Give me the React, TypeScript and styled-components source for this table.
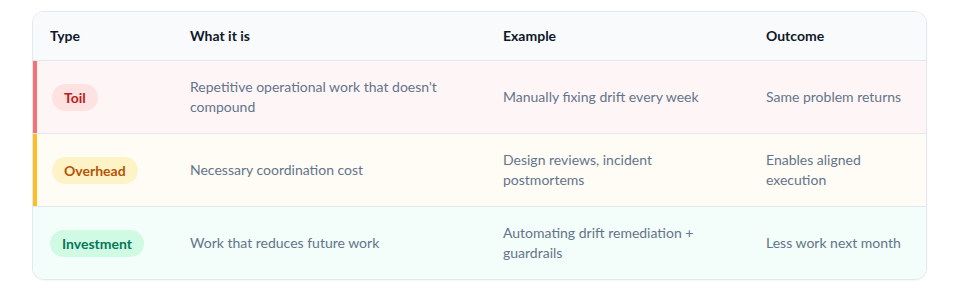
import React from "react";
import styled, { createGlobalStyle } from "styled-components";

const GlobalStyle = createGlobalStyle`
  html, body { margin: 0; padding: 0; background: #ffffff; }
  body { font-family: Lato, "Noto Sans", sans-serif; -webkit-font-smoothing: antialiased; }
`;

type Kind = "toil" | "overhead" | "investment";

const palette: Record<Kind, { row: string; bar: string; pillBg: string; pillFg: string }> = {
  toil: { row: "#fef6f6", bar: "#f87171", pillBg: "#fee2e2", pillFg: "#b91c1c" },
  overhead: { row: "#fffcf5", bar: "#fbbf24", pillBg: "#fef3c7", pillFg: "#b45309" },
  investment: { row: "#f3fdf9", bar: "transparent", pillBg: "#d1fae5", pillFg: "#047857" },
};

const Page = styled.div`
  padding: 11px 37px 28px 32px;
`;

const Card = styled.div`
  border: 1px solid #e2e8f0;
  border-radius: 12px;
  overflow: hidden;
  background: #ffffff;
  box-shadow: 0 1px 2px rgba(15, 23, 42, 0.04);
`;

const Grid = styled.div`
  display: grid;
  grid-template-columns: 140px 313px 263px 1fr;
`;

const HeaderRow = styled(Grid)`
  background: #f8fafc;
  border-bottom: 1px solid #e2e8f0;
`;

const HeadCell = styled.div`
  padding: 14px 17px;
  font-size: 14px;
  line-height: 20px;
  font-weight: 700;
  color: #0f172a;
`;

const Row = styled(Grid)<{ $kind: Kind; $last?: boolean }>`
  background: ${(p) => palette[p.$kind].row};
  border-bottom: ${(p) => (p.$last ? "none" : "1px solid #e2e8f0")};
  min-height: 72px;
`;

const TypeCell = styled.div<{ $kind: Kind }>`
  display: flex;
  align-items: center;
  padding: 16px 17px;
  border-left: ${(p) => (p.$kind === "investment" ? "none" : `4px solid ${palette[p.$kind].bar}`)};
  padding-left: ${(p) => (p.$kind === "investment" ? "17px" : "15px")};
`;

const Cell = styled.div`
  display: flex;
  align-items: center;
  padding: 16px 17px;
  font-size: 14px;
  line-height: 20px;
  color: #64748b;
`;

const Pill = styled.span<{ $kind: Kind }>`
  display: inline-flex;
  align-items: center;
  height: 27px;
  padding: 0 12px;
  border-radius: 999px;
  background: ${(p) => palette[p.$kind].pillBg};
  color: ${(p) => palette[p.$kind].pillFg};
  font-size: 14px;
  font-weight: 700;
  white-space: nowrap;
`;

const rows: { kind: Kind; label: string; what: string; example: string; outcome: string }[] = [
  {
    kind: "toil",
    label: "Toil",
    what: "Repetitive operational work that doesn't compound",
    example: "Manually fixing drift every week",
    outcome: "Same problem returns",
  },
  {
    kind: "overhead",
    label: "Overhead",
    what: "Necessary coordination cost",
    example: "Design reviews, incident postmortems",
    outcome: "Enables aligned execution",
  },
  {
    kind: "investment",
    label: "Investment",
    what: "Work that reduces future work",
    example: "Automating drift remediation + guardrails",
    outcome: "Less work next month",
  },
];

export default function App() {
  return (
    <>
      <GlobalStyle />
      <Page>
        <Card>
          <HeaderRow>
            <HeadCell>Type</HeadCell>
            <HeadCell>What it is</HeadCell>
            <HeadCell>Example</HeadCell>
            <HeadCell>Outcome</HeadCell>
          </HeaderRow>
          {rows.map((r, i) => (
            <Row key={r.kind} $kind={r.kind} $last={i === rows.length - 1}>
              <TypeCell $kind={r.kind}>
                <Pill $kind={r.kind}>{r.label}</Pill>
              </TypeCell>
              <Cell>{r.what}</Cell>
              <Cell>{r.example}</Cell>
              <Cell>{r.outcome}</Cell>
            </Row>
          ))}
        </Card>
      </Page>
    </>
  );
}
